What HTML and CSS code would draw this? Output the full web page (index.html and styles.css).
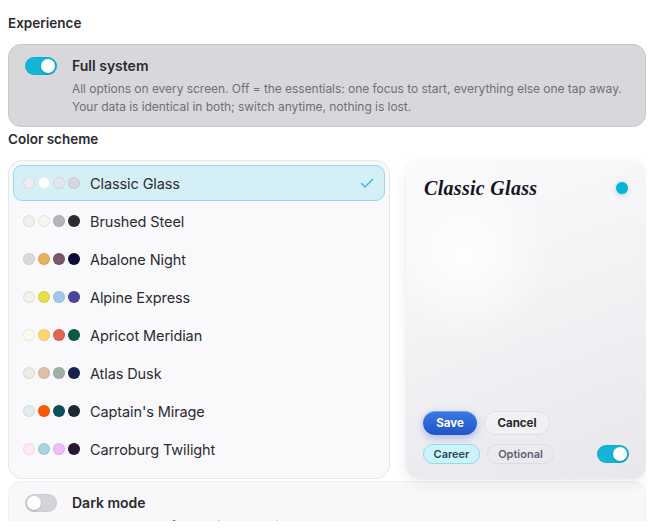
FILE: index.html
```html
<!DOCTYPE html>
<html>
<head>
<meta charset="utf-8">
<link rel="stylesheet" href="styles.css">
</head>
<body>
<main class="page">
  <h2 class="section-title first">Experience</h2>
  <div class="setting setting-active">
    <span class="toggle on"><span class="knob"></span></span>
    <div class="setting-text">
      <div class="setting-name">Full system</div>
      <p class="setting-desc">All options on every screen. Off = the essentials: one focus to start, everything else one tap away. Your data is identical in both; switch anytime, nothing is lost.</p>
    </div>
  </div>

  <h2 class="section-title">Color scheme</h2>
  <div class="scheme-grid">
    <ul class="scheme-list">
      <li class="scheme selected">
        <span class="dots"><i style="background:#ececf2"></i><i style="background:#ffffff"></i><i style="background:#e6e6ee"></i><i style="background:#d7d7df"></i></span>
        <span class="scheme-name">Classic Glass</span>
        <svg class="check" width="14" height="14" viewBox="0 0 14 14"><path d="M1.5 7.5 L5 11 L12.5 3.5" fill="none" stroke="#35b6dc" stroke-width="1.4" stroke-linecap="round" stroke-linejoin="round"/></svg>
      </li>
      <li class="scheme">
        <span class="dots"><i style="background:#f0f1ea"></i><i style="background:#f7f7f1"></i><i style="background:#b4b4bc"></i><i style="background:#2c2c30"></i></span>
        <span class="scheme-name">Brushed Steel</span>
      </li>
      <li class="scheme">
        <span class="dots"><i style="background:#dcdad6"></i><i style="background:#e3b25a"></i><i style="background:#7a566c"></i><i style="background:#0c0c38"></i></span>
        <span class="scheme-name">Abalone Night</span>
      </li>
      <li class="scheme">
        <span class="dots"><i style="background:#f1f1ea"></i><i style="background:#e6df4a"></i><i style="background:#a3c8ec"></i><i style="background:#4a46a0"></i></span>
        <span class="scheme-name">Alpine Express</span>
      </li>
      <li class="scheme">
        <span class="dots"><i style="background:#fff8ec"></i><i style="background:#ffd66e"></i><i style="background:#e06650"></i><i style="background:#0a5a4c"></i></span>
        <span class="scheme-name">Apricot Meridian</span>
      </li>
      <li class="scheme">
        <span class="dots"><i style="background:#efebe6"></i><i style="background:#dcc2a4"></i><i style="background:#9fb0a8"></i><i style="background:#16214c"></i></span>
        <span class="scheme-name">Atlas Dusk</span>
      </li>
      <li class="scheme">
        <span class="dots"><i style="background:#e2ecee"></i><i style="background:#ff5a00"></i><i style="background:#0a5258"></i><i style="background:#1a2a30"></i></span>
        <span class="scheme-name">Captain's Mirage</span>
      </li>
      <li class="scheme">
        <span class="dots"><i style="background:#fdeaf6"></i><i style="background:#a8d6dc"></i><i style="background:#ecbefa"></i><i style="background:#2e1434"></i></span>
        <span class="scheme-name">Carroburg Twilight</span>
      </li>
    </ul>

    <div class="preview">
      <div class="preview-head">
        <span class="preview-title">Classic Glass</span>
        <span class="accent-dot"></span>
      </div>
      <div class="preview-foot">
        <div class="btn-row">
          <span class="btn btn-primary">Save</span>
          <span class="btn btn-ghost">Cancel</span>
        </div>
        <div class="chip-row">
          <span class="chip chip-on">Career</span>
          <span class="chip">Optional</span>
          <span class="toggle on small-right"><span class="knob"></span></span>
        </div>
      </div>
    </div>
  </div>

  <div class="setting setting-plain">
    <span class="toggle"><span class="knob"></span></span>
    <div class="setting-text">
      <div class="setting-name">Dark mode</div>
      <p class="setting-desc">Low-glare theme for evenings and night use.</p>
    </div>
  </div>
</main>
</body>
</html>
```

FILE: styles.css
```css
* { box-sizing: border-box; }
html, body { background: #ffffff; }
body {
  margin: 8px;
  font-family: Inter, "Noto Sans", "Liberation Sans", sans-serif;
  color: #2a2a30;
}
.page {
  height: 513px;
  overflow: hidden;
}
.section-title {
  margin: 2px 0 11px;
  font-size: 13.5px;
  line-height: 20px;
  font-weight: 600;
  color: #2a2a30;
}
.section-title.first { margin-top: 5px; }

.setting {
  display: flex;
  gap: 15px;
  padding: 12px 16px 10px;
  border-radius: 13px;
  border: 1px solid transparent;
}
.setting-active {
  background: #d8d8dc;
  border-color: #c6c6cb;
}
.setting-plain {
  margin-top: 2px;
  background: #f8f8fa;
  border-color: #f1f1f4;
}
.setting-name {
  font-size: 14px;
  line-height: 18px;
  font-weight: 600;
  color: #2a2a30;
}
.setting-desc {
  margin: 5px 0 0;
  font-size: 12px;
  line-height: 18px;
  color: #6f6f79;
  letter-spacing: -0.04px;
}

.toggle {
  flex: none;
  position: relative;
  width: 32px;
  height: 18px;
  border-radius: 9px;
  background: #d3d3d8;
  box-shadow: inset 0 0 0 1px rgba(0,0,0,0.04);
}
.toggle .knob {
  position: absolute;
  top: 2px;
  left: 2px;
  width: 14px;
  height: 14px;
  border-radius: 50%;
  background: #fff;
  box-shadow: 0 1px 2px rgba(0,0,0,0.2);
}
.toggle.on { background: #13b4d7; }
.toggle.on .knob { left: 16px; }

.scheme-grid {
  display: grid;
  grid-template-columns: 382px 240px;
  gap: 16px;
}
.scheme-list {
  list-style: none;
  margin: 0;
  padding: 4px 4px 11px;
  background: #f9f9fb;
  border: 1px solid #e7e7eb;
  border-radius: 14px;
  display: flex;
  flex-direction: column;
  gap: 2px;
}
.scheme {
  display: flex;
  align-items: center;
  height: 36px;
  padding: 0 9px 0 9px;
  border: 1px solid transparent;
  border-radius: 9px;
}
.scheme.selected {
  background: #d5eff7;
  border-color: #93dbef;
}
.dots {
  display: flex;
  gap: 3px;
  margin-right: 10px;
}
.dots i {
  display: block;
  width: 12px;
  height: 12px;
  border-radius: 50%;
  box-shadow: inset 0 0 0 1px rgba(0,0,0,0.07);
}
.scheme-name {
  flex: 1;
  font-size: 14.5px;
  color: #2b2b31;
  letter-spacing: -0.1px;
}
.check { margin-right: 1px; }

.preview {
  display: flex;
  flex-direction: column;
  justify-content: space-between;
  padding: 17px 18px 15px 17px;
  border-radius: 14px;
  margin-top: 1px;
  background:
    radial-gradient(circle at 25% 30%, rgba(255,255,255,0.9) 0, rgba(255,255,255,0) 30%),
    linear-gradient(160deg, #fbfbfd 0%, #f2f2f5 50%, #e7e7ec 100%);
  box-shadow: 0 4px 14px rgba(0,0,0,0.07), 0 0 0 1px rgba(0,0,0,0.02);
}
.preview-head {
  display: flex;
  justify-content: space-between;
  align-items: center;
  padding-left: 1px;
}
.preview-title {
  font-family: "Liberation Serif", "DejaVu Serif", serif;
  font-style: italic;
  font-weight: 700;
  font-size: 20px;
  line-height: 20px;
  color: #15151c;
  letter-spacing: 0.3px;
}
.accent-dot {
  width: 12px;
  height: 12px;
  border-radius: 50%;
  background: #02b3dc;
  box-shadow: 0 1px 4px rgba(0,120,160,0.35);
}
.btn-row, .chip-row {
  display: flex;
  align-items: center;
  gap: 7px;
}
.chip-row { margin-top: 9px; }
.btn {
  display: inline-flex;
  align-items: center;
  justify-content: center;
  height: 24px;
  border-radius: 12px;
  font-size: 11.5px;
  font-weight: 700;
}
.btn-primary {
  width: 54px;
  color: #fff;
  background: linear-gradient(180deg, #3b7ae6 0%, #1f55c6 100%);
  box-shadow: 0 3px 8px rgba(40,90,210,0.35), inset 0 1px 0 rgba(255,255,255,0.3);
}
.btn-ghost {
  width: 66px;
  color: #26262c;
  border: 1px solid #dedee4;
  background: rgba(255,255,255,0.25);
}
.chip {
  display: inline-flex;
  align-items: center;
  justify-content: center;
  height: 20px;
  width: 67px;
  border-radius: 10px;
  font-size: 11px;
  font-weight: 600;
  color: #5f5f72;
  border: 1px solid #dcdce2;
}
.chip-on {
  width: 57px;
  color: #1d4a58;
  background: #cdf4fb;
  border-color: #90dbea;
}
.small-right { margin-left: auto; margin-right: -1px; }
```
